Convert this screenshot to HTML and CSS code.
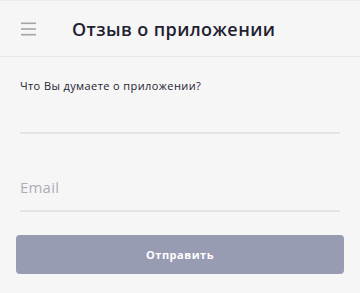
FILE: index.html
```html
<!DOCTYPE html>
<html lang="ru">
<head>
<meta charset="utf-8">
<link rel="stylesheet" href="styles.css">
</head>
<body>
<header class="topbar">
  <button class="menu" aria-label="Меню">
    <svg width="15" height="14" viewBox="0 0 15 14"><rect x="0" y="0.5" width="15" height="1.6" fill="#a3a3ab"/><rect x="0" y="6.2" width="15" height="1.6" fill="#a3a3ab"/><rect x="0" y="11.9" width="15" height="1.6" fill="#a3a3ab"/></svg>
  </button>
  <h1 class="title">Отзыв о приложении</h1>
</header>
<main class="form">
  <label class="field field-text">
    <span class="label">Что Вы думаете о приложении?</span>
    <span class="line"></span>
  </label>
  <label class="field field-email">
    <span class="placeholder">Email</span>
    <span class="line"></span>
  </label>
  <button class="submit">Отправить</button>
</main>
</body>
</html>
```
FILE: styles.css
```css
html, body {
  margin: 0;
  padding: 0;
  background: #f6f6f6;
  font-family: "Open Sans", "Liberation Sans", sans-serif;
}
.topbar {
  height: 55px;
  border-top: 1px solid #ececec;
  border-bottom: 1px solid #e6e6e6;
  display: flex;
  align-items: center;
  box-sizing: content-box;
}
.menu {
  border: 0;
  background: none;
  padding: 0;
  margin-left: 21px;
  width: 15px;
  height: 14px;
  display: flex;
  margin-top: 1px;
}
.title {
  margin: 0 0 0 36px;
  font-size: 18px;
  font-weight: 600;
  color: #1f2130;
  letter-spacing: 0.4px;
}
.form {
  padding: 0 20px 0 20px;
  display: flex;
  flex-direction: column;
}
.field {
  display: flex;
  flex-direction: column;
}
.field-text {
  padding-top: 21px;
}
.label {
  font-size: 11px;
  color: #232430;
  line-height: 16px;
  letter-spacing: 0.4px;
}
.line {
  height: 2px;
  background: #e4e4e4;
}
.field-text .line {
  margin-top: 38px;
}
.field-email {
  padding-top: 43px;
}
.placeholder {
  font-size: 15px;
  color: #adacba;
  line-height: 20px;
  letter-spacing: 0.2px;
}
.field-email .line {
  margin-top: 13px;
}
.submit {
  margin: 23px -4px 0;
  height: 39px;
  border: 0;
  border-radius: 4px;
  background: #989cb3;
  color: #fff;
  font-family: inherit;
  font-size: 11px;
  font-weight: 700;
  letter-spacing: 0.5px;
}
```
